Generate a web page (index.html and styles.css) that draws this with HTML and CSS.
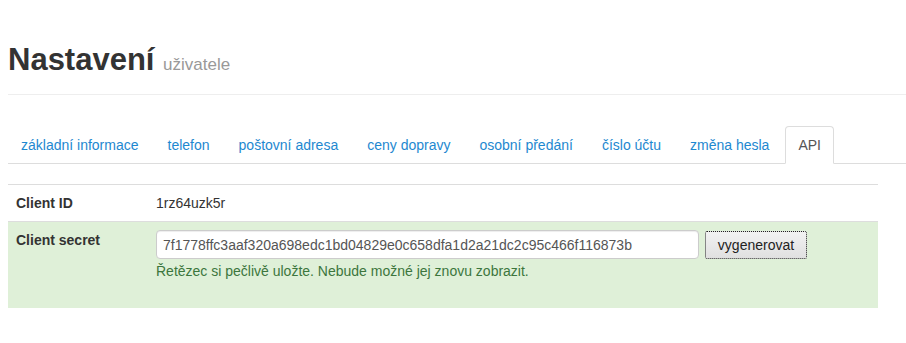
FILE: index.html
```html
<!DOCTYPE html>
<html>
<head>
  <meta charset="utf-8">
  <title>Nastavení uživatele</title>
  <link rel="stylesheet" href="styles.css">
</head>
<body>
<div class="Page">

  <div class="PageHeader">
    <h1>Nastavení <small>uživatele</small></h1>
  </div>

  <ul class="Tabs">
    <li><a href="#">základní informace</a></li>
    <li><a href="#">telefon</a></li>
    <li><a href="#">poštovní adresa</a></li>
    <li><a href="#">ceny dopravy</a></li>
    <li><a href="#">osobní předání</a></li>
    <li><a href="#">číslo účtu</a></li>
    <li><a href="#">změna hesla</a></li>
    <li class="is-active"><a href="#">API</a></li>
  </ul>

  <table class="ApiTable">
    <tr>
      <th>Client ID</th>
      <td>1rz64uzk5r</td>
    </tr>
    <tr class="is-success">
      <th>Client secret</th>
      <td>
        <div class="SecretRow">
          <input class="SecretInput" type="text" value="7f1778ffc3aaf320a698edc1bd04829e0c658dfa1d2a21dc2c95c466f116873b">
          <button class="GenerateButton" type="button">vygenerovat</button>
        </div>
        <p class="HelpBlock">Řetězec si pečlivě uložte. Nebude možné jej znovu zobrazit.</p>
      </td>
    </tr>
  </table>

</div>
</body>
</html>
```

FILE: styles.css
```css
body {
  margin: 0;
  padding: 0 0 0 8px;
  font-family: "Liberation Sans", Arial, sans-serif;
  font-size: 14px;
  line-height: 20px;
  color: #333;
  background: #fff;
}
.PageHeader {
  padding: 40px 0 9px;
  border-bottom: 1px solid #eee;
}
.PageHeader h1 {
  margin: 0;
  font-size: 31px;
  line-height: 40px;
  font-weight: bold;
  color: #333;
}
.PageHeader small {
  font-size: 17px;
  font-weight: normal;
  color: #999;
}
.Tabs {
  display: flex;
  margin: 31px 0 0;
  padding: 0;
  list-style: none;
  border-bottom: 1px solid #ddd;
}
.Tabs li {
  margin: 0 3px -1px 0;
}
.Tabs a {
  display: block;
  padding: 8px 12px;
  border: 1px solid transparent;
  border-radius: 4px 4px 0 0;
  color: #1e88d0;
  text-decoration: none;
}
.Tabs .is-active a {
  color: #555;
  background: #fff;
  border-color: #ddd #ddd transparent;
}
.ApiTable {
  width: 870px;
  margin-top: 20px;
  border-collapse: collapse;
  border-top: 1px solid #ddd;
}
.ApiTable th,
.ApiTable td {
  padding: 8px;
  text-align: left;
  vertical-align: top;
}
.ApiTable th {
  width: 124px;
  font-weight: bold;
}
.ApiTable tr + tr th,
.ApiTable tr + tr td {
  border-top: 1px solid #ddd;
}
.ApiTable .is-success th,
.ApiTable .is-success td {
  background: #dff0d8;
}
.SecretRow {
  display: flex;
  align-items: center;
  gap: 6px;
}
.SecretInput {
  box-sizing: border-box;
  width: 543px;
  height: 29px;
  padding: 0 6px;
  border: 1px solid #ccc;
  border-radius: 4px;
  box-shadow: inset 0 1px 1px rgba(0, 0, 0, 0.075);
  font: inherit;
  color: #555;
}
.GenerateButton {
  box-sizing: border-box;
  width: 102px;
  height: 28px;
  margin-top: 1px;
  padding: 0;
  border: 1px dotted #222;
  border-radius: 2px;
  background: linear-gradient(#f2f2f2, #e0e0e0);
  font: inherit;
  color: #222;
}
.HelpBlock {
  margin: 2px 0 19px;
  color: #3c763d;
}
```
